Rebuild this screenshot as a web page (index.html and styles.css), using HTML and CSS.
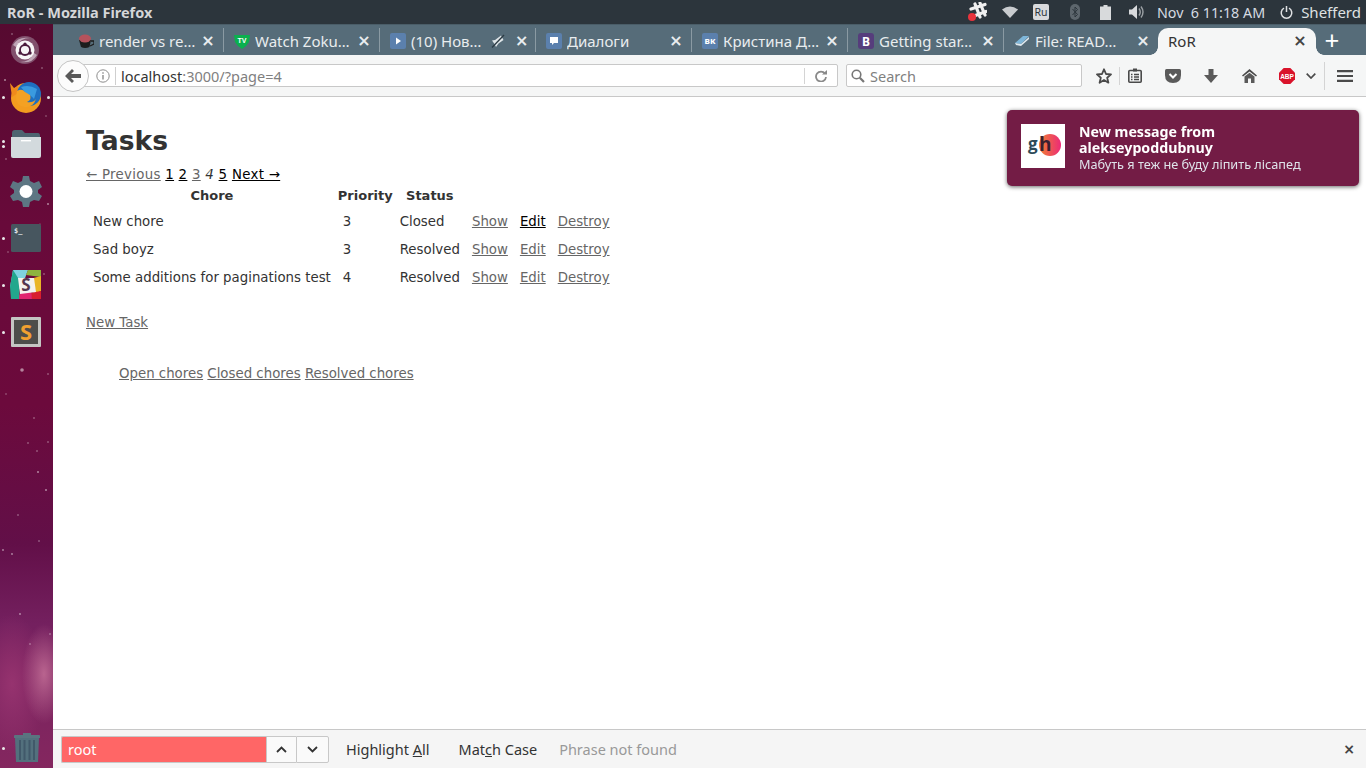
FILE: index.html
```html
<!DOCTYPE html>
<html>
<head>
	<title>RoR - Mozilla Firefox</title>
	<meta charset="UTF-8">
	<link rel="stylesheet" href="styles.css">
</head>
<body>
	<div id="Panel">
		<div class="panel-title">RoR - Mozilla Firefox</div>
		<div class="tray">
			<svg class="tray-slack" width="20" height="20" viewBox="0 0 20 20"><g stroke="#f0f0f0" stroke-width="3.2" fill="none" stroke-linecap="round"><path d="M8 2 L13 15"/><path d="M13 1 L18 13"/><path d="M4 7 L18 2.5"/><path d="M7 14 L19 9.5"/></g><circle cx="5" cy="15" r="4" fill="#e8333c"/></svg>
			<svg class="tray-wifi" width="16" height="12" viewBox="0 0 16 12"><path d="M0 3.5 Q8 -2.5 16 3.5 L8 12 Z" fill="#c9cccf"/></svg>
			<div class="tray-lang">Ru</div>
			<svg class="tray-bt" width="10" height="16" viewBox="0 0 10 16"><rect width="10" height="16" rx="5" fill="#5d666d"/><path d="M2.5 5 L7.5 10.5 L5 13 L5 3 L7.5 5.5 L2.5 11" fill="none" stroke="#2c353c" stroke-width="1"/></svg>
			<svg class="tray-battery" width="11" height="15" viewBox="0 0 11 15"><path d="M3.5 0 H7.5 V1.5 H11 V15 H0 V1.5 H3.5 Z" fill="#d8dadc"/></svg>
			<svg class="tray-sound" width="15" height="14" viewBox="0 0 15 14"><path d="M0 4.5 H3 L8 0 V14 L3 9.5 H0 Z" fill="#d8dadc"/><path d="M10 3.5 Q12.5 7 10 10.5 M12 1.5 Q16 7 12 12.5" stroke="#9ba0a4" stroke-width="1.4" fill="none"/></svg>
			<div class="tray-clock">Nov &nbsp;6 11:18 AM</div>
			<svg class="tray-power" width="13" height="13" viewBox="0 0 13 13"><path d="M4 2.2 A5.3 5.3 0 1 0 9 2.2 M6.5 0 V6" fill="none" stroke="#dfe1e3" stroke-width="1.5"/></svg>
			<div class="tray-user">Shefferd</div>
		</div>
	</div>

	<div id="Desktop">
		<div id="Launcher">
			<svg class="launcher-stars" width="53" height="744" viewBox="0 0 53 744">
				<g fill="#ffffff" opacity="0.5">
					<circle cx="22" cy="346" r="1.8"/><circle cx="26" cy="300" r="1"/><circle cx="35" cy="300" r="0.8"/><circle cx="15" cy="314" r="0.8"/><circle cx="34" cy="394" r="0.8"/>
					<circle cx="38" cy="448" r="1"/><circle cx="46" cy="466" r="1"/><circle cx="37" cy="427" r="0.8"/><circle cx="28" cy="419" r="0.8"/><circle cx="48" cy="418" r="0.8"/>
					<circle cx="18" cy="491" r="0.8"/><circle cx="3" cy="526" r="0.9"/><circle cx="12" cy="530" r="0.9"/><circle cx="39" cy="517" r="0.8"/><circle cx="20" cy="590" r="0.9"/>
					<circle cx="30" cy="620" r="0.8"/><circle cx="48" cy="180" r="1"/><circle cx="6" cy="135" r="0.8"/><circle cx="50" cy="610" r="0.8"/><circle cx="12" cy="10" r="0.8"/>
					<circle cx="42" cy="44" r="0.8"/><circle cx="5" cy="56" r="1"/><circle cx="30" cy="5" r="0.7"/><circle cx="46" cy="92" r="0.7"/><circle cx="8" cy="228" r="0.7"/>
					<circle cx="44" cy="250" r="0.8"/><circle cx="16" cy="270" r="0.7"/><circle cx="40" cy="200" r="0.6"/><circle cx="6" cy="370" r="0.7"/><circle cx="48" cy="350" r="0.8"/>
				</g>
			</svg>
			<div class="launcher-items">
				<div class="launcher-item">
					<svg class="ubuntu-icon" width="30" height="30" viewBox="0 0 30 30"><circle cx="15" cy="15" r="14" fill="#9c7f95" opacity="0.6"/><path d="M3 10 Q8 1 20 3 Q10 3 6 12 Z M27 20 Q22 29 10 27 Q20 27 24 18 Z" fill="#d8c8d4" opacity="0.7"/><circle cx="15" cy="15" r="9.5" fill="#f7f5f6"/><circle cx="15" cy="15" r="5" fill="none" stroke="#4a1a3c" stroke-width="1.8"/><circle cx="15" cy="9.3" r="1.7" fill="#4a1a3c"/><circle cx="10" cy="18" r="1.7" fill="#4a1a3c"/><circle cx="20" cy="18" r="1.7" fill="#4a1a3c"/></svg>
				</div>
				<div class="launcher-item">
					<i class="pip"></i><i class="pip right"></i>
					<svg width="34" height="32" viewBox="0 0 34 32"><circle cx="17" cy="17" r="15" fill="#f39c1f"/><path d="M1 2 L5 7 L9 5 L9 12 L3 16 Z" fill="#ef8a1c"/><circle cx="20" cy="13" r="12" fill="#1f6fc0"/><path d="M12 6 Q20 3 28 8 L25 18 Q20 12 18 14 Z" fill="#3a9adf"/><path d="M8 10 Q13 7 16 11 L21 14 Q23 19 18 21 Q24 22 27 18 Q24 27 15 26 Q7 24 7 16 Z" fill="#f4a123"/></svg>
				</div>
				<div class="launcher-item">
					<i class="pip two"></i>
					<svg width="32" height="30" viewBox="0 0 32 30"><path d="M2 4 Q2 1 5 1 H12 L15 4 H28 Q30 4 30 7 V12 H2 Z" fill="#4d6470"/><path d="M1 8 H31 V27 Q31 29 29 29 H3 Q1 29 1 27 Z" fill="#d3dadd"/><rect x="11" y="11" width="10" height="1.4" fill="#ffffff"/></svg>
				</div>
				<div class="launcher-item">
					<svg width="32" height="32" viewBox="0 0 32 32"><path d="M13 1 H19 L20 6 L24 8 L29 6 L32 12 L28 15 V18 L32 21 L29 26 L24 25 L20 27 L19 32 H13 L12 27 L8 25 L3 26 L0 21 L4 18 V15 L0 12 L3 6 L8 8 L12 6 Z" fill="#5d7683"/><circle cx="16" cy="16.5" r="6.5" fill="#ffffff"/></svg>
				</div>
				<div class="launcher-item">
					<i class="pip"></i>
					<svg width="30" height="28" viewBox="0 0 30 28"><rect width="30" height="28" rx="1.5" fill="#47565f"/><text x="3" y="9" class="term-prompt">$_</text></svg>
				</div>
				<div class="launcher-item">
					<i class="pip"></i>
					<svg width="32" height="32" viewBox="0 0 32 32"><path d="M3 1 H18 L11 20 L0 18 Z" fill="#7fd2e0"/><path d="M18 1 H31 V8 L16 6 Z" fill="#8db33f"/><path d="M31 7 V22 L24 25 L20 10 Z" fill="#e9b526"/><path d="M31 22 V30 H22 L20 24 Z" fill="#d81e2e"/><path d="M22 30 H8 L10 23 L21 21 Z" fill="#e0246f"/><path d="M0 18 L3 1 L10 12 L9 30 H1 Z" fill="#22a78d"/><path d="M8 9 L24 9 L26 23 L10 25 Z" fill="#f4f1ee"/><text x="16" y="22" class="slack-s">S</text></svg>
				</div>
				<div class="launcher-item">
					<i class="pip"></i>
					<svg width="30" height="30" viewBox="0 0 30 30"><rect width="30" height="30" rx="1" fill="#c4c5c3"/><rect x="3" y="3" width="24" height="24" fill="#4d4d4b"/><text x="15" y="23" class="sublime-s">S</text></svg>
				</div>
			</div>
			<div class="launcher-item launcher-trash">
				<i class="pip"></i>
				<svg width="26" height="30" viewBox="0 0 26 30"><path d="M9 1 H17 V3 H25 Q26 3 26 4 V6 H0 V4 Q0 3 1 3 H9 Z" fill="#5a7480"/><path d="M1 6 H25 L24 30 H2 Z" fill="#53707d"/><path d="M6 8 V28 M10.5 8 V28 M15.5 8 V28 M20 8 V28" stroke="#41596a" stroke-width="2"/></svg>
			</div>
		</div>

		<div id="Browser">
			<div class="tabbar">
				<div class="tab">
					<svg width="16" height="16" viewBox="0 0 16 16"><path d="M1 7 H13 L11.5 14 Q7 16 3 14 Z" fill="#1d1d1d"/><path d="M13 8 H16 V11 L12 13" fill="none" stroke="#1d1d1d" stroke-width="1.3"/><ellipse cx="7" cy="5.5" rx="6" ry="4" fill="#b5525c"/></svg>
					<span class="tab-title">render vs re…</span><span class="tab-close">×</span>
				</div>
				<div class="tab">
					<svg width="16" height="16" viewBox="0 0 16 16"><path d="M0 2 H16 L15 9 Q13 13 8 16 Q3 13 1 9 Z" fill="#0bb04e"/><text x="8" y="10" class="fav-tv">TV</text></svg>
					<span class="tab-title">Watch Zoku…</span><span class="tab-close">×</span>
				</div>
				<div class="tab">
					<svg width="16" height="16" viewBox="0 0 16 16"><rect width="16" height="16" rx="2" fill="#5b80ad"/><path d="M6 4.5 L11 8 L6 11.5 Z" fill="#ffffff"/></svg>
					<span class="tab-title short">(10) Нов…</span>
					<svg class="tab-mute" width="14" height="14" viewBox="0 0 14 14"><path d="M1 6.5 L4 6 L10 1.5 L12.5 6 L7.5 9.5 L5 13 L3.5 10 Z" fill="#dfe5e8"/><path d="M1 13.5 L13 1" stroke="#2c3b44" stroke-width="1.3"/></svg>
					<span class="tab-close">×</span>
				</div>
				<div class="tab">
					<svg width="16" height="16" viewBox="0 0 16 16"><rect width="16" height="16" rx="2" fill="#5b80ad"/><path d="M4 4 H12 V10 H8 L6 12 V10 H4 Z" fill="#ffffff"/></svg>
					<span class="tab-title">Диалоги</span><span class="tab-close">×</span>
				</div>
				<div class="tab">
					<svg width="16" height="16" viewBox="0 0 16 16"><rect width="16" height="16" rx="2" fill="#5b80ad"/><text x="8" y="11" class="fav-vk">вк</text></svg>
					<span class="tab-title">Кристина Д…</span><span class="tab-close">×</span>
				</div>
				<div class="tab">
					<svg width="16" height="16" viewBox="0 0 16 16"><rect width="16" height="16" rx="3" fill="#563d7c"/><text x="8" y="12.5" class="fav-b">B</text></svg>
					<span class="tab-title">Getting star…</span><span class="tab-close">×</span>
				</div>
				<div class="tab">
					<svg width="16" height="16" viewBox="0 0 16 16"><path d="M1 10 L9 3 H15 L7 11 Z" fill="#7eb6d9"/><path d="M1 10 L7 11 L15 4 V6 L7 13 L2 12 Z" fill="#dfe9ef"/></svg>
					<span class="tab-title">File: READ…</span><span class="tab-close">×</span>
				</div>
				<div class="tab active">
					<span class="tab-title">RoR</span><span class="tab-close">×</span>
				</div>
				<div class="tab-new">+</div>
			</div>

			<div class="navbar">
				<div class="back-button">
					<svg width="16" height="14" viewBox="0 0 16 14"><path d="M7 0 L9 2 L6 5 H16 V9 H6 L9 12 L7 14 L0 7 Z" fill="#5a5a5a"/></svg>
				</div>
				<div class="urlbar">
					<svg class="info-icon" width="14" height="14" viewBox="0 0 14 14"><circle cx="7" cy="7" r="6.2" fill="none" stroke="#8c8c8c"/><path d="M7 6 V10.5 M7 3.2 V4.8" stroke="#8c8c8c" stroke-width="1.4"/></svg>
					<div class="url-text">localhost<span class="url-rest">:3000/?page=4</span></div>
					<svg class="reload-icon" width="12" height="12" viewBox="0 0 12 12"><path d="M10 3.5 A5 5 0 1 0 11 7" fill="none" stroke="#8a8a8a" stroke-width="1.8"/><path d="M7 4.5 H12 V0 Z" fill="#8a8a8a"/></svg>
				</div>
				<div class="searchbar">
					<svg width="14" height="14" viewBox="0 0 14 14"><circle cx="5.5" cy="5.5" r="4.3" fill="none" stroke="#777777" stroke-width="1.6"/><path d="M8.8 8.8 L13 13" stroke="#777777" stroke-width="2.2"/></svg>
					<span>Search</span>
				</div>
				<div class="nav-icons">
					<svg class="ni-star" width="16" height="16" viewBox="0 0 16 16"><path d="M8 1.3 L10 6 L15 6.4 L11.2 9.7 L12.4 14.7 L8 12 L3.6 14.7 L4.8 9.7 L1 6.4 L6 6 Z" fill="none" stroke="#4a4a4a" stroke-width="1.8" stroke-linejoin="round"/></svg>
					<i class="nav-sep"></i>
					<svg class="ni-list" width="14" height="15" viewBox="0 0 14 15"><rect x="0.8" y="2.5" width="12.4" height="11.7" rx="1" fill="none" stroke="#4a4a4a" stroke-width="1.6"/><rect x="5" y="0.5" width="4" height="3" fill="#4a4a4a"/><path d="M3 6.5 H4.5 M6 6.5 H11 M3 9 H4.5 M6 9 H11 M3 11.5 H4.5 M6 11.5 H11" stroke="#4a4a4a" stroke-width="1.3"/></svg>
					<svg class="ni-pocket" width="16" height="14" viewBox="0 0 16 14"><path d="M1.5 0 H14.5 Q16 0 16 1.5 V6 Q16 14 8 14 Q0 14 0 6 V1.5 Q0 0 1.5 0 Z" fill="#5a5a5a"/><path d="M4.5 5 L8 8.5 L11.5 5" fill="none" stroke="#ffffff" stroke-width="2"/></svg>
					<svg class="ni-down" width="14" height="14" viewBox="0 0 14 14"><path d="M4.5 0 H9.5 V6 H14 L7 14 L0 6 H4.5 Z" fill="#5a5a5a"/></svg>
					<svg class="ni-home" width="15" height="14" viewBox="0 0 15 14"><path d="M7.5 0 L15 6.5 L14 7.5 L7.5 2.5 L1 7.5 L0 6.5 Z" fill="#4a4a4a"/><path d="M2.5 7.5 L7.5 3.8 L12.5 7.5 V14 H9 V9.5 H6 V14 H2.5 Z" fill="#5a5a5a"/></svg>
					<svg class="ni-abp" width="16" height="16" viewBox="0 0 16 16"><path d="M4.7 0 H11.3 L16 4.7 V11.3 L11.3 16 H4.7 L0 11.3 V4.7 Z" fill="#d9132b"/><text x="8" y="10.6" class="abp-text">ABP</text></svg>
					<svg class="ni-chevron" width="10" height="6" viewBox="0 0 10 6"><path d="M0.7 0.7 L5 5 L9.3 0.7" fill="none" stroke="#4a4a4a" stroke-width="1.7"/></svg>
					<i class="nav-sep tall"></i>
					<svg class="ni-menu" width="16" height="12" viewBox="0 0 16 12"><path d="M0 1.2 H16 M0 6 H16 M0 10.8 H16" stroke="#4a4a4a" stroke-width="2.2"/></svg>
				</div>
			</div>

			<div id="Page">
				<h1>Tasks</h1>
				<div class="pagination">
					<span class="disabled">← Previous</span>
					<a href="#">1</a>
					<a href="#">2</a>
					<a href="#" class="seen">3</a>
					<em>4</em>
					<a href="#">5</a>
					<a href="#">Next →</a>
				</div>
				<table>
					<thead>
						<tr><th>Chore</th><th>Priority</th><th>Status</th><th colspan="3"></th></tr>
					</thead>
					<tbody>
						<tr><td>New chore</td><td>3</td><td>Closed</td><td><a href="#" class="seen">Show</a></td><td><a href="#">Edit</a></td><td><a href="#" class="seen">Destroy</a></td></tr>
						<tr><td>Sad boyz</td><td>3</td><td>Resolved</td><td><a href="#" class="seen">Show</a></td><td><a href="#" class="seen">Edit</a></td><td><a href="#" class="seen">Destroy</a></td></tr>
						<tr><td>Some additions for paginations test</td><td>4</td><td>Resolved</td><td><a href="#" class="seen">Show</a></td><td><a href="#" class="seen">Edit</a></td><td><a href="#" class="seen">Destroy</a></td></tr>
					</tbody>
				</table>
				<div class="new-task"><a href="#" class="seen">New Task</a></div>
				<div class="filters">
					<a href="#" class="seen">Open chores</a>
					<a href="#" class="seen">Closed chores</a>
					<a href="#" class="seen">Resolved chores</a>
				</div>
			</div>

			<div class="findbar">
				<div class="find-input">root</div>
				<div class="find-btn">
					<svg width="11" height="7" viewBox="0 0 11 7"><path d="M1 6 L5.5 1.5 L10 6" fill="none" stroke="#333333" stroke-width="1.8"/></svg>
				</div>
				<div class="find-btn last">
					<svg width="11" height="7" viewBox="0 0 11 7"><path d="M1 1 L5.5 5.5 L10 1" fill="none" stroke="#333333" stroke-width="1.8"/></svg>
				</div>
				<div class="find-label first">Highlight <u>A</u>ll</div>
				<div class="find-label">Mat<u>c</u>h Case</div>
				<div class="find-status">Phrase not found</div>
				<div class="find-close">×</div>
			</div>
		</div>
	</div>

	<div id="Notify">
		<svg class="notify-icon" width="44" height="44" viewBox="0 0 44 44">
			<defs><linearGradient id="ghGrad" x1="0" y1="0" x2="1" y2="0"><stop offset="0" stop-color="#f08030"/><stop offset="1" stop-color="#ec2a78"/></linearGradient></defs>
			<rect width="44" height="44" fill="#ffffff"/>
			<circle cx="29" cy="21" r="11" fill="url(#ghGrad)"/>
			<text x="7" y="26" class="gh-g">g</text>
			<text x="18" y="27" class="gh-h">h</text>
		</svg>
		<div class="notify-text">
			<div class="notify-title">New message from<br>alekseypoddubnuy</div>
			<div class="notify-body">Мабуть я теж не буду ліпить лісапед</div>
		</div>
	</div>
</body>
</html>
```
FILE: styles.css
```css
html, body {
	margin: 0;
	height: 100%;
	overflow: hidden;
}

body {
	display: flex;
	flex-direction: column;
	font-family: "Noto Sans", "Open Sans", sans-serif;
	background-color: #ffffff;
}

svg {
	display: block;
	flex: none;
}

/* top panel */

#Panel {
	flex: none;
	height: 24px;
	display: flex;
	align-items: center;
	justify-content: space-between;
	background-color: #2c353c;
	color: #dfe1e3;
	font-size: 14px;
}

.panel-title {
	padding-left: 7px;
	font-weight: 700;
	font-size: 14.5px;
	color: #d4d6d8;
}

.tray {
	display: flex;
	align-items: center;
}

.tray-slack {
	margin-right: 15px;
}

.tray-wifi {
	margin-right: 15px;
}

.tray-lang {
	width: 16px;
	height: 16px;
	margin-right: 21px;
	background-color: #d8dadc;
	border-radius: 2px;
	color: #2c353c;
	font-size: 10.5px;
	line-height: 16px;
	text-align: center;
}

.tray-bt {
	margin-right: 20px;
}

.tray-battery {
	margin-right: 18px;
}

.tray-sound {
	margin-right: 13px;
}

.tray-clock {
	margin-right: 15px;
	font-size: 14.3px;
	white-space: pre;
	color: #d5dbe2;
}

.tray-power {
	margin-right: 8px;
}

.tray-user {
	margin-right: 5px;
	font-size: 15px;
}

/* launcher */

#Desktop {
	flex: 1;
	display: flex;
	min-height: 0;
}

#Launcher {
	flex: none;
	position: relative;
	width: 53px;
	display: flex;
	flex-direction: column;
	background:
		radial-gradient(ellipse 22px 50px at 44px 650px, #b9648f 0%, rgba(185, 100, 143, 0) 100%),
		radial-gradient(ellipse 34px 70px at 12px 660px, #96336f 0%, rgba(150, 51, 111, 0) 100%),
		linear-gradient(to bottom, #560a30 0px, #680a3a 200px, #6c0a3c 380px, #620f48 520px, #74205f 600px, #84275f 744px);
}

.launcher-stars {
	position: absolute;
	left: 0;
	top: 0;
}

.launcher-items {
	position: relative;
	padding-top: 2.5px;
	flex: 1;
}

.launcher-item {
	position: relative;
	height: 47px;
	padding-right: 1px;
	display: flex;
	align-items: center;
	justify-content: center;
}

.ubuntu-icon {
	margin-right: 2px;
}

.launcher-trash {
	height: 40px;
	padding: 0 0 1px 1px;
}

.pip {
	position: absolute;
	left: 2px;
	top: 50%;
	width: 3px;
	height: 3px;
	margin-top: -1px;
	background-color: #e8e8e8;
	border-radius: 50%;
}

.pip.right {
	left: 47px;
}

.pip.two {
	margin-top: -4px;
	box-shadow: 0 5px 0 #e8e8e8;
}

.term-prompt {
	font: bold 7px "DejaVu Sans Mono", monospace;
	fill: #dfe5e8;
}

.slack-s {
	font: bold 17px "Open Sans", sans-serif;
	fill: #54364f;
	text-anchor: middle;
}

.sublime-s {
	font: bold 22px "Open Sans", sans-serif;
	fill: #f0a030;
	text-anchor: middle;
}

/* tabs */

#Browser {
	flex: 1;
	min-width: 0;
	display: flex;
	flex-direction: column;
}

.tabbar {
	flex: none;
	height: 31px;
	box-sizing: border-box;
	padding-left: 15px;
	display: flex;
	align-items: center;
	background-color: #566c79;
	border-top: 1px solid #4a5d68;
}

.tab {
	box-sizing: border-box;
	width: 156px;
	height: 24px;
	padding: 2px 8px 0 10px;
	display: flex;
	align-items: center;
	border-right: 1px solid #8a9aa3;
	color: #e9edef;
	font-size: 15px;
	white-space: nowrap;
}

.tab:nth-child(7) {
	width: 154px;
	border-right: none;
}

.tab-title {
	flex: 1;
	margin-left: 5px;
	overflow: hidden;
}

.tab-title.short {
	flex: none;
	width: 80px;
}

.tab-mute {
	margin-right: 10px;
}

.tab-close {
	width: 14px;
	color: #e9edef;
	font: bold 16px "DejaVu Sans", sans-serif;
	line-height: 20px;
	text-align: center;
}

.tab.active {
	position: relative;
	align-self: flex-end;
	width: 158px;
	height: 27px;
	padding: 0 9px 2px 10px;
	border-right: none;
	border-radius: 10px 10px 0 0;
	background-color: #f5f6f6;
	color: #333333;
}

.tab.active::before,
.tab.active::after {
	content: "";
	position: absolute;
	bottom: 0;
	width: 8px;
	height: 8px;
}

.tab.active::before {
	left: -8px;
	background: radial-gradient(circle at 0 0, #566c79 7.5px, #f5f6f6 8px);
}

.tab.active::after {
	right: -8px;
	background: radial-gradient(circle at 100% 0, #566c79 7.5px, #f5f6f6 8px);
}

.tab.active .tab-title {
	margin-left: 0;
}

.tab.active .tab-close {
	color: #444444;
}

.tab-new {
	width: 32px;
	color: #ffffff;
	font-size: 26px;
	line-height: 28px;
	text-align: center;
}

.fav-tv {
	font: bold 7px "Liberation Sans", sans-serif;
	fill: #ffffff;
	text-anchor: middle;
}

.fav-vk {
	font: bold 9px "Noto Sans", sans-serif;
	fill: #ffffff;
	text-anchor: middle;
}

.fav-b {
	font: bold 12px "Noto Sans", sans-serif;
	fill: #ffffff;
	text-anchor: middle;
}

/* nav bar */

.navbar {
	flex: none;
	position: relative;
	height: 42px;
	box-sizing: border-box;
	padding-left: 20px;
	display: flex;
	align-items: center;
	background-color: #f5f6f6;
	border-bottom: 1px solid #c8c8c8;
}

.back-button {
	position: absolute;
	left: 4px;
	top: 5px;
	width: 30px;
	height: 30px;
	display: flex;
	align-items: center;
	justify-content: center;
	background-color: #fcfcfc;
	border: 1px solid #c4c4c4;
	border-radius: 50%;
}

.urlbar {
	box-sizing: border-box;
	width: 765px;
	height: 23px;
	padding-left: 22px;
	display: flex;
	align-items: center;
	background-color: #ffffff;
	border: 1px solid #c8c8c8;
	border-radius: 2px;
	font-size: 14.5px;
}

.info-icon {
	margin-right: 5px;
}

.url-text {
	flex: 1;
	height: 18px;
	padding-left: 5px;
	border-left: 1px solid #cfcfcf;
	color: #333333;
	line-height: 18px;
}

.url-rest {
	color: #808080;
}

.reload-icon {
	box-sizing: content-box;
	padding: 2px 10px 2px 10px;
	border-left: 1px solid #d4d4d4;
}

.searchbar {
	box-sizing: border-box;
	width: 236px;
	height: 23px;
	margin-left: 8px;
	padding-left: 4px;
	display: flex;
	align-items: center;
	gap: 5px;
	background-color: #ffffff;
	border: 1px solid #c8c8c8;
	border-radius: 2px;
	color: #808080;
	font-size: 14.5px;
}

.nav-icons {
	display: flex;
	align-items: center;
}

.ni-star {
	margin-left: 14px;
}

.nav-sep {
	width: 1px;
	height: 18px;
	margin: 0 8px 0 7px;
	background-color: #d4d4d4;
}

.nav-sep.tall {
	height: 28px;
	margin: 0 12px 0 8px;
}

.ni-pocket {
	margin-left: 23px;
}

.ni-down {
	margin-left: 23px;
}

.ni-home {
	margin-left: 24px;
}

.ni-abp {
	margin-left: 22px;
}

.ni-chevron {
	margin-left: 11px;
}

.abp-text {
	font: bold 6.5px "Liberation Sans", sans-serif;
	fill: #ffffff;
	text-anchor: middle;
}

/* page */

#Page {
	flex: 1;
	min-height: 0;
	padding: 33px;
	background-color: #ffffff;
	color: #333333;
	font-family: "DejaVu Sans", Verdana, sans-serif;
	font-size: 13.33px;
	line-height: 18px;
}

h1 {
	margin: 0 0 14px;
	font-size: 26.6px;
	line-height: 22px;
}

a {
	color: #000000;
}

a.seen {
	color: #666666;
}

.disabled {
	color: #666666;
	text-decoration: underline;
}

.pagination {
	letter-spacing: 0.3px;
}

.pagination em {
	color: #333333;
}

table {
	border-spacing: 2px;
	margin-top: 1px;
}

th {
	padding: 0 0 6px;
	font-size: 13px;
}

td {
	padding: 0 5px 8px;
}

.new-task {
	margin-top: 17px;
}

.filters {
	margin-top: 33px;
	padding-left: 33px;
}

/* find bar */

.findbar {
	flex: none;
	height: 39px;
	box-sizing: border-box;
	padding-left: 8px;
	display: flex;
	align-items: center;
	background-color: #f5f5f5;
	border-top: 1px solid #c8c8c8;
	color: #333333;
	font-size: 14.5px;
}

.find-input {
	box-sizing: border-box;
	width: 205px;
	height: 27px;
	padding-left: 6px;
	background-color: #ff6666;
	border: 1px solid #c8c8c8;
	border-right: none;
	border-radius: 2px 0 0 2px;
	color: #ffffff;
	line-height: 25px;
}

.find-btn {
	box-sizing: border-box;
	width: 30px;
	height: 27px;
	display: flex;
	align-items: center;
	justify-content: center;
	background-color: #fafafa;
	border: 1px solid #c8c8c8;
	border-right: none;
}

.find-btn.last {
	width: 33px;
	border-right: 1px solid #c8c8c8;
	border-radius: 0 2px 2px 0;
}

.find-label {
	margin-right: 22px;
}

.find-label.first {
	margin-left: 17px;
	margin-right: 29px;
}

.find-status {
	flex: 1;
	color: #999999;
}

.find-close {
	width: 34px;
	font: bold 14px "DejaVu Sans", sans-serif;
	text-align: center;
	color: #444444;
}

/* notification */

#Notify {
	position: fixed;
	left: 1007px;
	top: 110px;
	box-sizing: border-box;
	width: 352px;
	height: 76px;
	padding: 14px;
	display: flex;
	gap: 14px;
	background-color: #731c45;
	border-radius: 5px;
	box-shadow: 0 1px 4px rgba(0, 0, 0, 0.6);
	color: #ffffff;
}

.notify-title {
	font-weight: 700;
	font-size: 14.2px;
	line-height: 16px;
}

.notify-body {
	margin-top: 1px;
	color: #dfe3ea;
	font-size: 12.7px;
	line-height: 15px;
}

.gh-g {
	font: bold 17px "Open Sans", sans-serif;
	fill: #2c4a58;
}

.gh-h {
	font: bold 19px "Open Sans", sans-serif;
	fill: #3a2030;
}
```
